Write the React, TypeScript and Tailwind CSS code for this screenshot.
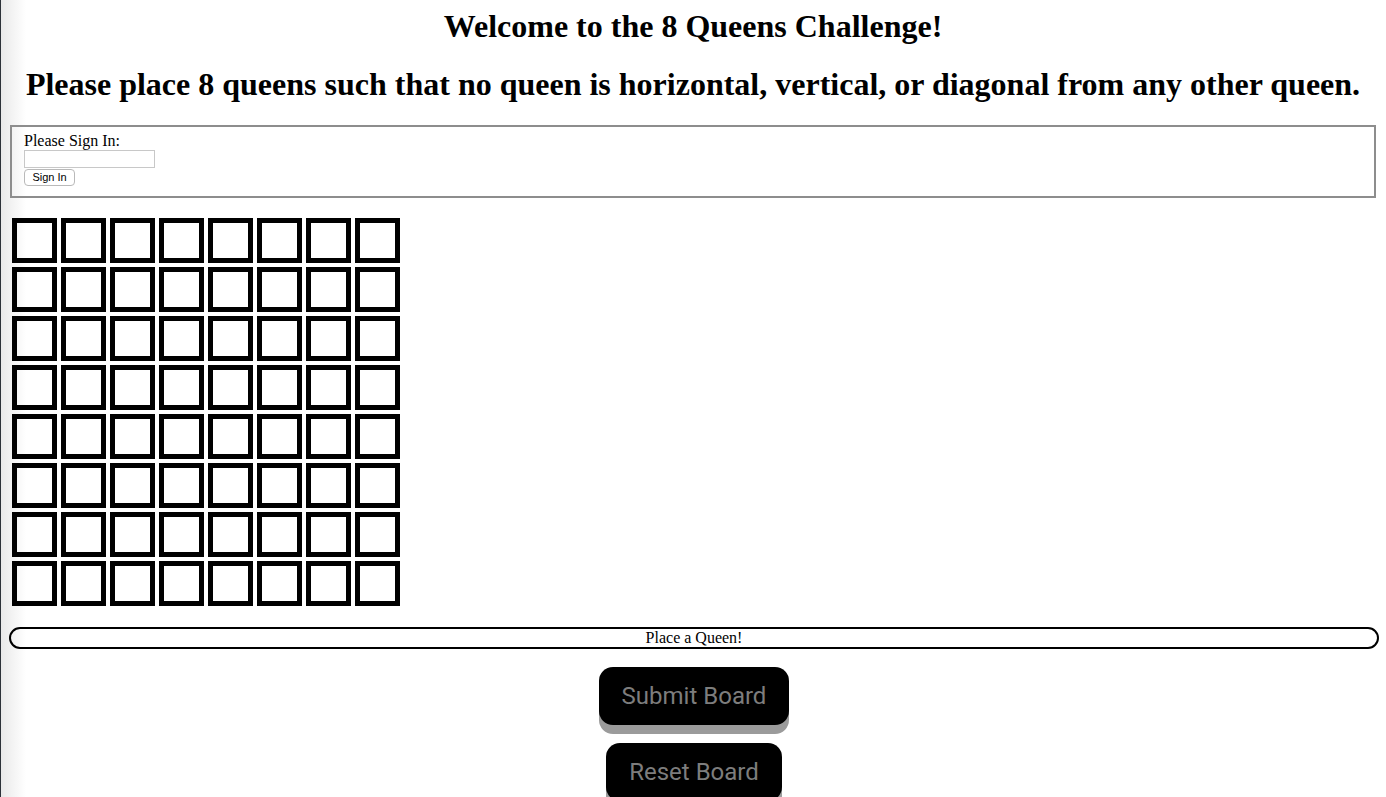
import { useState } from 'react';

const SIZE = 8;

export default function App() {
  const [queens, setQueens] = useState<boolean[]>(Array(SIZE * SIZE).fill(false));
  const [name, setName] = useState('');

  const toggle = (i: number) => {
    setQueens((q) => q.map((v, j) => (j === i ? !v : v)));
  };

  return (
    <div className="relative min-h-screen bg-white text-black font-['Liberation_Serif',serif]">
      {/* window edge shading on the left, sits behind the page */}
      <div className="pointer-events-none absolute inset-y-0 left-0 w-[26px] bg-gradient-to-r from-[#e8e8e8] to-transparent" />
      <div className="pointer-events-none absolute inset-y-0 left-0 w-[1px] bg-[#2c3138]" />

      <div className="relative px-[8px] pt-[8px] pb-[40px]">
        <h1 className="text-center text-[32px] font-bold leading-[37px] mb-[21px]">
          Welcome to the 8 Queens Challenge!
        </h1>
        <h1 className="text-center text-[32px] font-bold leading-[37px] mb-[22px]">
          Please place 8 queens such that no queen is horizontal, vertical, or diagonal from any other queen.
        </h1>

        <fieldset className="mx-[2px] border-2 border-[#8d8d8d] px-[12px] pt-[5px] pb-[10px]">
          <div className="text-[16px] leading-[18px]">Please Sign In:</div>
          <input
            value={name}
            onChange={(e) => setName(e.target.value)}
            className="block h-[18px] w-[131px] border border-[#c8c8c8] bg-white px-1 text-[12px] outline-none"
          />
          <button className="mt-[1px] block h-[17px] w-[51px] rounded-[4px] border border-[#b9b9b9] bg-white font-['Liberation_Sans',sans-serif] text-[11px] leading-[15px]">
            Sign In
          </button>
        </fieldset>

        <div className="mt-[20px] ml-[4px] grid w-max grid-cols-[repeat(8,45px)] gap-[4px]">
          {queens.map((q, i) => (
            <div
              key={i}
              onClick={() => toggle(i)}
              className="flex h-[45px] w-[45px] cursor-pointer items-center justify-center border-[5px] border-black text-[24px]"
            >
              {q ? '♛' : ''}
            </div>
          ))}
        </div>

        <div className="mt-[21px] ml-[1px] -mr-[1px] h-[22px] rounded-[11px] border-2 border-black text-center text-[16px] leading-[18px]">
          Place a Queen!
        </div>

        <div className="mt-[18px] flex flex-col items-center gap-[18px] font-['Roboto',sans-serif]">
          <button className="ml-[2px] rounded-[14px] bg-black px-[23px] py-[15px] text-[24px] leading-[28px] text-[#7d7d7d] shadow-[0_9px_0_#9b9b9b]">
            Submit Board
          </button>
          <button
            onClick={() => setQueens(Array(SIZE * SIZE).fill(false))}
            className="ml-[2px] rounded-[14px] bg-black px-[23px] py-[15px] text-[24px] leading-[28px] text-[#7d7d7d] shadow-[0_9px_0_#9b9b9b]"
          >
            Reset Board
          </button>
        </div>
      </div>
    </div>
  );
}
